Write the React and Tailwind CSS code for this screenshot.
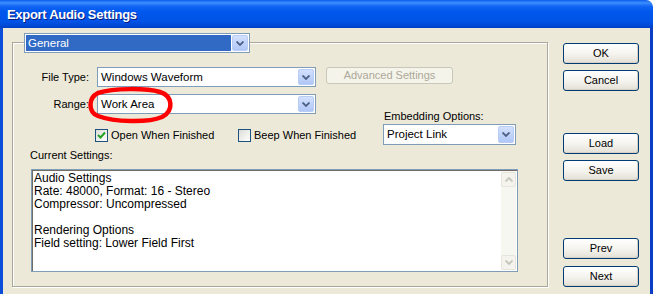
import React from "react";

function Chevron() {
  return (
    <svg width="8" height="5" viewBox="0 0 8 5" className="block">
      <path d="M0.5 0.5 L4 4 L7.5 0.5" fill="none" stroke="#4D6185" strokeWidth="1.8" />
    </svg>
  );
}

function DropBtn() {
  return (
    <div className="flex h-full w-[16px] shrink-0 items-center justify-center rounded-[2px] border border-[#B9CCF6] bg-gradient-to-b from-[#D3E0FD] to-[#B0C7F7]">
      <Chevron />
    </div>
  );
}

function Select({ value, className = "", selected = false }) {
  return (
    <div className={"flex items-stretch border border-[#7F9DB9] bg-white p-[1px] " + className}>
      <div
        className={
          "mr-[1px] flex flex-1 items-center pl-[2px] text-[11.5px] " +
          (selected ? "bg-[#316AC5] text-white" : "text-black")
        }
      >
        {value}
      </div>
      <DropBtn />
    </div>
  );
}

function Checkbox({ checked, label }) {
  return (
    <div className="flex items-center gap-[3px]">
      <div className="flex h-[13px] w-[13px] items-center justify-center border border-[#1C5180] bg-gradient-to-br from-[#DCDCD7] to-white">
        {checked && (
          <svg width="9" height="9" viewBox="0 0 9 9" className="block">
            <path d="M1 4 L3.5 6.5 L8 1.5" fill="none" stroke="#21A121" strokeWidth="2" />
          </svg>
        )}
      </div>
      <span>{label}</span>
    </div>
  );
}

function XPButton({ children, className = "" }) {
  return (
    <div
      className={
        "flex h-[21px] w-[76px] items-center justify-center rounded-[3px] border border-[#003C74] bg-gradient-to-b from-white via-[#F5F4EF] to-[#E3E0D6] shadow-[inset_-1px_-1px_0_#D6D0C5] text-black " +
        className
      }
    >
      {children}
    </div>
  );
}

function ScrollArrow({ up }) {
  return (
    <div className="flex h-[15px] w-[15px] items-center justify-center rounded-[2px] border border-[#E6E5DC] bg-[#F4F3EE]">
      <svg width="8" height="5" viewBox="0 0 8 5" className="block">
        <path
          d={up ? "M0.5 4.5 L4 1 L7.5 4.5" : "M0.5 0.5 L4 4 L7.5 0.5"}
          fill="none"
          stroke="#C6C5BC"
          strokeWidth="1.8"
        />
      </svg>
    </div>
  );
}

export default function App() {
  return (
    <div className="relative h-[294px] w-[653px] overflow-hidden bg-white font-['Liberation_Sans',Arial,sans-serif] text-[11px] leading-[13px] text-black">
      {/* Title bar */}
      <div className="flex h-[28px] items-center rounded-tr-[7px] bg-[linear-gradient(to_bottom,#0A5CEB_0%,#3D8EFF_10%,#1266F2_22%,#0058EE_40%,#0054E6_75%,#0049D6_92%,#003DBF_100%)] pl-[7px]">
        <span className="text-[13px] font-bold tracking-[-0.3px] text-white [text-shadow:1px_1px_0_#0A1E80]">
          Export Audio Settings
        </span>
      </div>

      {/* Body */}
      <div className="flex h-[266px] border-l-[3px] border-r-[3px] border-l-[#0B4FD8] border-r-[#0A3FC4] bg-[#ECE9D8]">
        {/* Group box */}
        <div className="ml-[9px] mt-[14px] flex h-[245px] w-[536px] flex-col border border-[#ACA899] shadow-[inset_1px_1px_0_#fff,1px_1px_0_#fff]">
          <Select value="General" selected className="ml-[11px] mt-[-10px] h-[20px] w-[226px]" />

          {/* File Type row */}
          <div className="mt-[14px] flex items-start">
            <div className="w-[76px] text-right leading-[20px]">File Type:</div>
            <Select value="Windows Waveform" className="ml-[8px] h-[20px] w-[219px]" />
            <div className="ml-[10px] flex h-[17px] w-[127px] items-center justify-center rounded-[3px] border border-[#C9C7BA] bg-[#F5F4EA] text-[#ACA899]">
              Advanced Settings
            </div>
          </div>

          {/* Range row */}
          <div className="mt-[7px] flex items-start">
            <div className="w-[76px] text-right leading-[20px]">Range:</div>
            <Select value="Work Area" className="ml-[8px] h-[20px] w-[219px]" />
          </div>

          {/* Checkbox + embedding row */}
          <div className="mt-[-4px] flex items-start">
            <div className="ml-[82px] mt-[19px] w-[143px]">
              <Checkbox checked label="Open When Finished" />
            </div>
            <div className="mt-[19px] w-[145px]">
              <Checkbox label="Beep When Finished" />
            </div>
            <div className="flex flex-col">
              <div className="pl-[1px]">Embedding Options:</div>
              <Select value="Project Link" className="mt-[1px] h-[21px] w-[133px]" />
            </div>
          </div>

          <div className="ml-[17px] mt-[4px]">Current Settings:</div>

          {/* Text area */}
          <div className="ml-[18px] mt-[7px] flex h-[103px] w-[487px] border border-[#7F9DB9] bg-white shadow-[inset_1px_1px_0_#716F64]">
            <div className="flex-1 pl-[2px] pt-[2px] text-[12px] leading-[13px]">
              <div>Audio Settings</div>
              <div>Rate: 48000, Format: 16 - Stereo</div>
              <div>Compressor: Uncompressed</div>
              <div>&nbsp;</div>
              <div>Rendering Options</div>
              <div>Field setting: Lower Field First</div>
            </div>
            <div className="my-[1px] mr-[1px] flex w-[15px] flex-col justify-between bg-[#F7F7F2] pt-[1px]">
              <ScrollArrow up />
              <ScrollArrow />
            </div>
          </div>
        </div>

        {/* Right buttons */}
        <div className="ml-[15px] mt-[15px] flex flex-col">
          <XPButton>OK</XPButton>
          <XPButton className="mt-[6px]">Cancel</XPButton>
          <XPButton className="mt-[42px]">Load</XPButton>
          <XPButton className="mt-[6px]">Save</XPButton>
          <XPButton className="mt-[57px]">Prev</XPButton>
          <XPButton className="mt-[7px]">Next</XPButton>
        </div>
      </div>

      {/* Red hand-drawn annotation */}
      <svg
        className="pointer-events-none absolute left-[86px] top-[86px]"
        width="90"
        height="40"
        viewBox="0 0 90 40"
      >
        <path
          d="M12 7 C28 2, 60 2, 74 6 C87 10, 88 25, 76 31 C62 37, 28 36, 12 30 C2 26, 2 12, 12 7 Z"
          fill="none"
          stroke="#FF0000"
          strokeWidth="4.5"
        />
      </svg>
    </div>
  );
}
